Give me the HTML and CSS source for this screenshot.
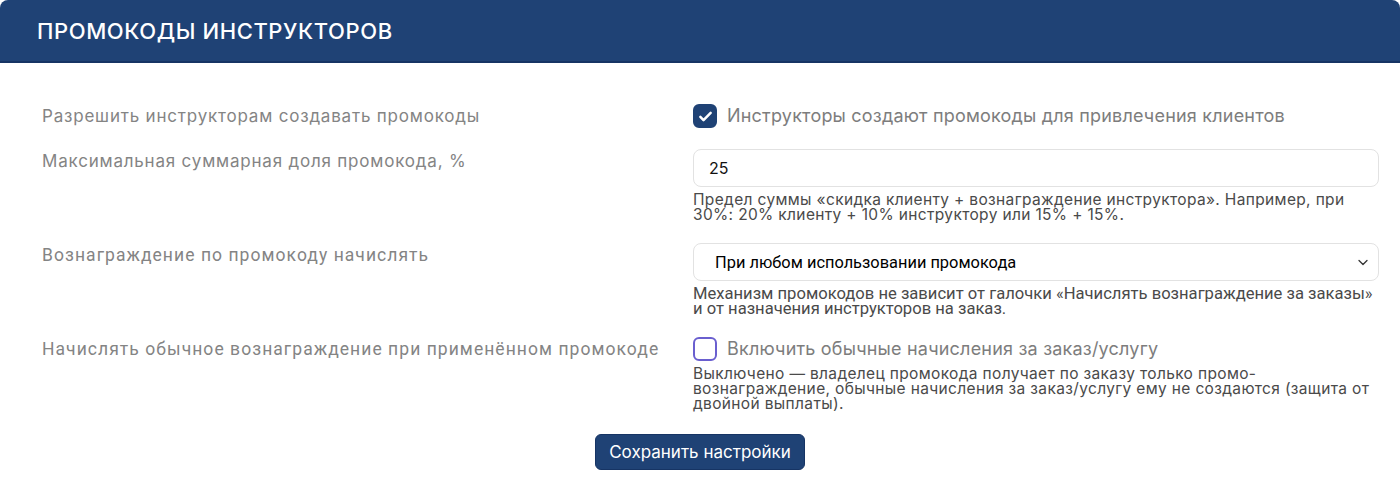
FILE: index.html
```html
<!DOCTYPE html>
<html lang="ru">
<head>
    <meta charset="utf-8">
    <title>Промокоды инструкторов</title>
    <link rel="stylesheet" href="styles.css">
</head>
<body>
    <div class="card">
        <div class="card-header">
            <h2 class="card-title">ПРОМОКОДЫ ИНСТРУКТОРОВ</h2>
        </div>
        <form class="card-body">
            <div class="form-row">
                <label class="form-label">Разрешить инструкторам создавать промокоды</label>
                <div class="form-field">
                    <label class="check">
                        <input type="checkbox" class="check-input" checked>
                        <span class="check-box">
                            <svg viewBox="0 0 24 24" width="19" height="19"><path d="M5.5 12.5l4 4L18.5 7.5" fill="none" stroke="#fff" stroke-width="3.2" stroke-linecap="round" stroke-linejoin="round"/></svg>
                        </span>
                        <span class="check-text">Инструкторы создают промокоды для привлечения клиентов</span>
                    </label>
                </div>
            </div>

            <div class="form-row">
                <label class="form-label">Максимальная суммарная доля промокода, %</label>
                <div class="form-field">
                    <input type="text" class="form-control" value="25">
                    <div class="form-help">Предел суммы «скидка клиенту + вознаграждение инструктора». Например, при 30%: 20% клиенту + 10% инструктору или 15% + 15%.</div>
                </div>
            </div>

            <div class="form-row">
                <label class="form-label narrow">Вознаграждение по промокоду начислять</label>
                <div class="form-field">
                    <div class="select-wrap">
                        <select class="form-control form-select">
                            <option>При любом использовании промокода</option>
                        </select>
                        <svg class="select-arrow" viewBox="0 0 12 12" width="12" height="12"><path d="M2 4.5l4 4 4-4" fill="none" stroke="#333" stroke-width="1.3" stroke-linecap="round" stroke-linejoin="round"/></svg>
                    </div>
                    <div class="form-help narrow">Механизм промокодов не зависит от галочки «Начислять вознаграждение за заказы» и от назначения инструкторов на заказ.</div>
                </div>
            </div>

            <div class="form-row">
                <label class="form-label narrow">Начислять обычное вознаграждение при применённом промокоде</label>
                <div class="form-field">
                    <label class="check">
                        <input type="checkbox" class="check-input">
                        <span class="check-box"></span>
                        <span class="check-text">Включить обычные начисления за заказ/услугу</span>
                    </label>
                    <div class="form-help">Выключено — владелец промокода получает по заказу только промо-вознаграждение, обычные начисления за заказ/услугу ему не создаются (защита от двойной выплаты).</div>
                </div>
            </div>

            <div class="form-actions">
                <button type="submit" class="btn-save">Сохранить настройки</button>
            </div>
        </form>
    </div>
</body>
</html>
```

FILE: styles.css
```css
* {
    margin: 0;
    padding: 0;
    box-sizing: border-box;
}

body {
    background: #fff;
    font-family: Inter, 'Noto Sans', sans-serif;
}

.card {
    width: 1400px;
    background: #fff;
}

.card-header {
    height: 63px;
    background: #1f4275;
    border-bottom: 2px solid #163464;
    border-radius: 8px 8px 0 0;
    padding: 0 37px;
    display: flex;
    align-items: center;
}

.card-title {
    color: #fff;
    font-size: 22px;
    font-weight: 500;
    letter-spacing: 0.6px;
}

.card-body {
    padding: 41px 21px 0 42px;
}

.form-row {
    display: grid;
    grid-template-columns: 651px 1fr;
    margin-bottom: 21px;
}

.form-label {
    color: #848484;
    font-size: 17px;
    letter-spacing: 0.8px;
    line-height: 24px;
}

.form-label.narrow {
    font-family: Roboto, sans-serif;
    font-size: 17.5px;
    letter-spacing: 1.05px;
}

.check {
    display: flex;
    align-items: center;
    gap: 10px;
    cursor: pointer;
}

.check-input {
    display: none;
}

.check-box {
    width: 24px;
    height: 24px;
    border: 2px solid #6a5fcf;
    border-radius: 6px;
    background: #fff;
    display: flex;
    align-items: center;
    justify-content: center;
}

.check-input:checked + .check-box {
    background: #1f4275;
    border-color: #1f4275;
}

.check-text {
    color: #7d7d7d;
    font-size: 18px;
    letter-spacing: 0.2px;
    line-height: 24px;
}

.form-control {
    display: block;
    width: 100%;
    height: 38px;
    padding: 0 15px;
    border: 1px solid #e2e2e2;
    border-radius: 8px;
    background: #fff;
    color: #111;
    font-family: Inter, sans-serif;
    font-size: 16px;
    outline: none;
}

.select-wrap {
    position: relative;
}

.form-select {
    appearance: none;
    padding-left: 21px;
    font-family: Roboto, sans-serif;
    font-size: 16.4px;
    color: #000;
}

.select-arrow {
    position: absolute;
    right: 10px;
    top: 13px;
}

.form-help {
    margin-top: 5px;
    color: #4a4a4a;
    font-size: 15.5px;
    letter-spacing: 0.35px;
    line-height: 15px;
}

.form-help.narrow {
    font-family: Roboto, sans-serif;
    font-size: 16.6px;
    letter-spacing: 0;
}

.form-actions {
    display: flex;
    justify-content: center;
    padding-top: 2px;
    margin-left: -21px;
}

.btn-save {
    width: 210px;
    height: 36px;
    background: #1f4275;
    color: #fff;
    border: 1px solid #163464;
    border-radius: 6px;
    font-family: Inter, sans-serif;
    font-size: 17px;
    cursor: pointer;
}
```
